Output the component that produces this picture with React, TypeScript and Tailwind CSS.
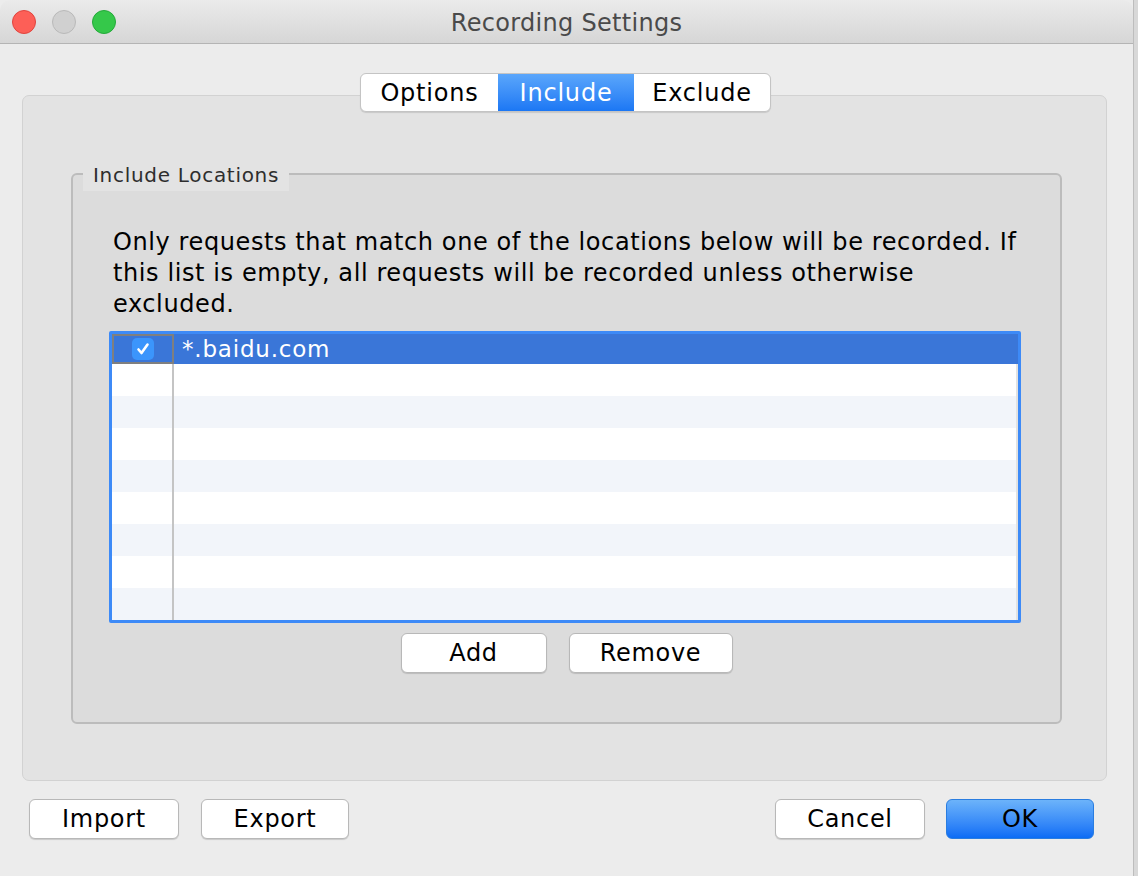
import React from 'react';

const font = { fontFamily: '"DejaVu Sans", "Noto Sans", sans-serif' };

function MacButton({ label, className = '', primary = false }: { label: string; className?: string; primary?: boolean }) {
  return (
    <button
      className={`h-[40px] rounded-[6px] text-[24px] tracking-[0.7px] leading-none flex items-center justify-center ${
        primary
          ? 'bg-gradient-to-b from-[#6cb3fa] to-[#0a6cf5] border border-[#2a7de0] text-black'
          : 'bg-white border border-[#b8b8b8] text-black shadow-[0_1px_1px_rgba(0,0,0,0.15)]'
      } ${className}`}
    >
      {label}
    </button>
  );
}

export default function App() {
  const rows = Array.from({ length: 8 });
  return (
    <div className="w-[1138px] h-[876px] flex bg-[#ececec] overflow-hidden" style={font}>
      <div className="w-[1134px] h-full flex flex-col bg-[#ececec] border-r border-[#bdbdbd]">
        {/* Title bar */}
        <div className="relative h-[44px] shrink-0 bg-gradient-to-b from-[#ebebeb] to-[#d6d6d6] border-b border-[#b4b4b4] flex items-center justify-center rounded-tl-[10px] rounded-tr-[10px]">
          <div className="absolute left-[12px] top-[10px] flex gap-[16px]">
            <span className="w-[24px] h-[24px] rounded-full bg-[#fd5f57] border border-[#e0443e]" />
            <span className="w-[24px] h-[24px] rounded-full bg-[#d0d0d0] border border-[#b9b9b9]" />
            <span className="w-[24px] h-[24px] rounded-full bg-[#35c84a] border border-[#24a93a]" />
          </div>
          <span className="text-[24px] tracking-[0.3px] text-[#4a4a4a] mt-[2px]">Recording Settings</span>
        </div>

        {/* Tab area */}
        <div className="relative ml-[22px] mr-[26px] mt-[51px] h-[686px] rounded-[7px] bg-[#e3e3e3] border border-[#d2d2d2] flex flex-col">
          <div className="absolute -top-[23px] left-[337px] flex h-[39px] rounded-[6px] overflow-hidden border border-[#c4c4c4] bg-white shadow-[0_1px_1px_rgba(0,0,0,0.12)] text-[24px] tracking-[0.8px]">
            <div className="w-[137px] flex items-center justify-center text-black">Options</div>
            <div className="w-[136px] flex items-center justify-center text-white bg-gradient-to-b from-[#5aa6fb] to-[#1b77f4]">Include</div>
            <div className="w-[136px] flex items-center justify-center text-black">Exclude</div>
          </div>

          {/* Group box */}
          <div className="relative ml-[48px] mr-[44px] mt-[77px] h-[551px] rounded-[6px] border-2 border-[#bcbcbc] bg-[#dcdcdc] flex flex-col">
            <div className="absolute -top-[17px] left-[10px] h-[33px] px-[10px] bg-[#e3e3e3] flex items-center text-[20px] tracking-[0.7px] text-[#2e2e2e]">
              Include Locations
            </div>
            <p className="mt-[52px] ml-[40px] text-[24px] tracking-[0.6px] leading-[31px] text-black whitespace-nowrap">
              Only requests that match one of the locations below will be recorded. If
              <br />
              this list is empty, all requests will be recorded unless otherwise
              <br />
              excluded.
            </p>

            {/* Table */}
            <div className="ml-[36px] mt-[11px] w-[912px] h-[292px] border-[3px] border-[#3d8af7] rounded-[2px] bg-white overflow-hidden flex flex-col">
              <div className="h-[30px] shrink-0 flex bg-[#3a76d8] text-white">
                <div className="w-[62px] flex items-center justify-center border-2 border-[#7f7f7f]">
                  <span className="w-[22px] h-[22px] rounded-[5px] bg-[#3b95fc] flex items-center justify-center">
                    <svg width="16" height="16" viewBox="0 0 16 16">
                      <path d="M3.5 8.5 L6.5 12 L12.5 3.5" stroke="white" strokeWidth="2.6" fill="none" strokeLinecap="round" strokeLinejoin="round" />
                    </svg>
                  </span>
                </div>
                <div className="flex-1 flex items-center pl-[8px] text-[23px] tracking-[0.8px]">*.baidu.com</div>
              </div>
              {rows.map((_, i) => (
                <div key={i} className={`h-[32px] shrink-0 flex ${i % 2 === 0 ? 'bg-white' : 'bg-[#f2f5fa]'}`}>
                  <div className="w-[62px] border-r-2 border-[#c4c4c4]" />
                  <div className="flex-1 border-r-2 border-[#e2e2e2]" />
                </div>
              ))}
            </div>

            <div className="flex justify-center gap-[22px] mt-[10px]">
              <MacButton label="Add" className="w-[146px]" />
              <MacButton label="Remove" className="w-[164px]" />
            </div>
          </div>
        </div>

        {/* Footer buttons */}
        <div className="flex mt-[18px] px-[29px]">
          <MacButton label="Import" className="w-[150px]" />
          <MacButton label="Export" className="w-[148px] ml-[22px]" />
          <div className="flex-1" />
          <MacButton label="Cancel" className="w-[150px]" />
          <MacButton label="OK" primary className="w-[148px] ml-[21px] mr-[10px]" />
        </div>
      </div>
      <div className="flex-1 bg-[#d8d8d8]" />
    </div>
  );
}
